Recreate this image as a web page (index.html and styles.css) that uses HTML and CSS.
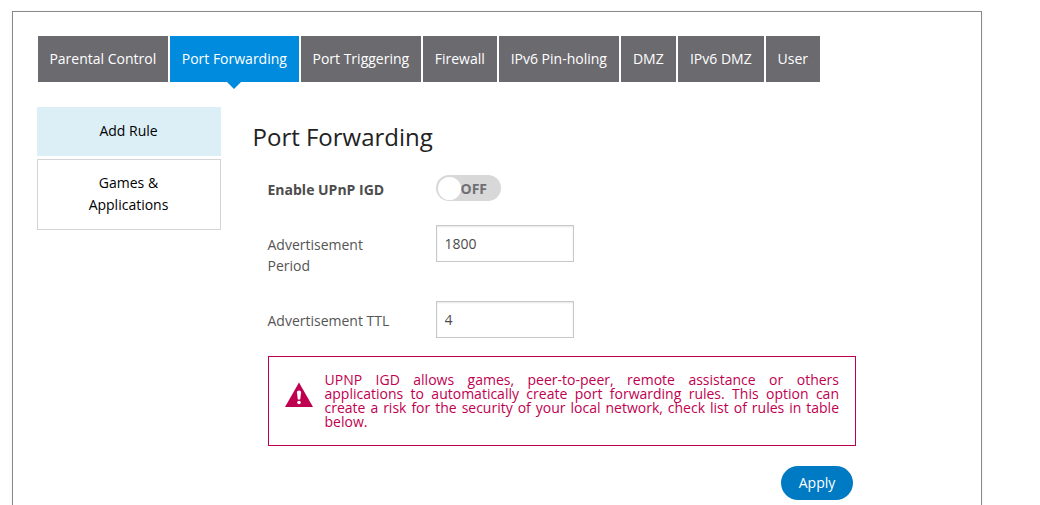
FILE: index.html
```html
<!DOCTYPE html>
<html lang="en">
<head>
<meta charset="utf-8">
<title>Port Forwarding</title>
<link rel="stylesheet" href="styles.css">
</head>
<body>
<main class="panel">
  <nav class="tabs">
    <a class="tab w130">Parental Control</a>
    <a class="tab w129 active">Port Forwarding</a>
    <a class="tab w120">Port Triggering</a>
    <a class="tab w74">Firewall</a>
    <a class="tab w120">IPv6 Pin-holing</a>
    <a class="tab w55">DMZ</a>
    <a class="tab w86">IPv6 DMZ</a>
    <a class="tab w54">User</a>
  </nav>
  <div class="body">
    <aside class="side">
      <a class="side-item current">Add Rule</a>
      <a class="side-item">Games &amp;<br>Applications</a>
    </aside>
    <section class="content">
      <h1 class="title">Port Forwarding</h1>
      <div class="form">
        <div class="row row-toggle">
          <span class="label strong">Enable UPnP IGD</span>
          <span class="toggle"><span class="knob"></span><span class="state">OFF</span></span>
        </div>
        <div class="row row-period">
          <label class="label" for="period">Advertisement<br>Period</label>
          <input class="field" id="period" value="1800">
        </div>
        <div class="row row-ttl">
          <label class="label" for="ttl">Advertisement TTL</label>
          <input class="field" id="ttl" value="4">
        </div>
        <div class="warning">
          <svg class="warn-icon" viewBox="0 0 28 25"><path d="M14 0.5 28 25H0Z" fill="#bf0050"/><path d="M11.9 10q0-1.5 2.1-1.5t2.1 1.5l-.9 7.5h-2.4z" fill="#fff"/><circle cx="14" cy="20.5" r="1.8" fill="#fff"/></svg>
          <p class="warn-text">UPNP IGD allows games, peer-to-peer, remote assistance or others applications to automatically create port forwarding rules. This option can create a risk for the security of your local network, check list of rules in table below.</p>
        </div>
        <div class="actions"><button class="apply">Apply</button></div>
      </div>
    </section>
  </div>
</main>
</body>
</html>
```

FILE: styles.css
```css
* { box-sizing: border-box; }
body {
  display: flow-root;
  margin: 0;
  background: #fff;
  font-family: "Open Sans", sans-serif;
  font-size: 14px;
  color: #555;
}
.panel {
  width: 970px;
  height: 494px;
  margin: 11px 0 0 12px;
  padding: 24px 25px 0 24px;
  border: 1px solid #888;
  border-bottom: 0;
  box-shadow: 0 1px 4px rgba(0, 0, 0, .06);
}
.tabs { display: flex; gap: 2px; padding-left: 1px; }
.tab {
  position: relative;
  height: 46px;
  padding-right: 0.4px;
  line-height: 46px;
  text-align: center;
  white-space: nowrap;
  color: #fff;
  background: #6b6a6f;
}
.tab.active { background: #008bdf; }
.tab.active::after {
  content: "";
  position: absolute;
  left: 57px;
  top: 46px;
  border: 7px solid transparent;
  border-top-color: #008bdf;
  border-bottom: 0;
}
.w130 { width: 130px; }
.w129 { width: 129px; }
.w120 { width: 120px; }
.w74 { width: 74px; }
.w55 { width: 55px; }
.w86 { width: 86px; }
.w54 { width: 54px; }
.body { display: flex; padding-top: 25px; }
.side { width: 184px; display: flex; flex-direction: column; gap: 3px; }
.side-item {
  padding: 12px 1px 13px 0;
  border: 1px solid #d5d5d5;
  line-height: 22px;
  text-align: center;
  color: #000;
}
.side-item.current { padding: 13px 1px 14px 0; border: 0; background: #dceff7; }
.content { padding-left: 31.5px; }
.title {
  margin: 13px 0 0;
  font-size: 24px;
  font-weight: 400;
  line-height: 34px;
  color: #222;
}
.form { width: 588px; margin-left: 15.5px; }
.row { display: flex; align-items: flex-start; }
.row-toggle { height: 71px; padding-top: 21px; }
.row-period { height: 76px; }
.row-ttl { height: 55px; }
.label { width: 168px; margin-left: -0.5px; margin-right: 0.5px; padding-top: 9px; line-height: 21px; color: #555; }
.strong { padding-top: 4px; font-weight: 700; color: #4c4c4c; }
.toggle {
  display: flex;
  align-items: center;
  width: 65px;
  height: 26px;
  padding: 0 1.5px;
  border-radius: 13px;
  background: #d8d8d8;
}
.knob { width: 23px; height: 23px; border-radius: 50%; background: #fff; }
.state { font-weight: 700; color: #706f74; }
.field {
  width: 138px;
  height: 37px;
  padding: 0 7.5px;
  border: 1px solid #c8c8c8;
  border-radius: 0;
  box-shadow: inset 0 1px 2px rgba(0, 0, 0, .1);
  font: inherit;
  color: #4c4c4c;
}
.warning {
  display: flex;
  height: 90px;
  padding: 16px 16px 0 15.5px;
  border: 1px solid #bf0050;
}
.warn-icon { flex: none; width: 28px; height: 25px; margin: 9px 12px 0 0; }
.warn-text { width: 515px; margin: 0; line-height: 14px; text-align: justify; color: #bf0050; }
.actions { display: flex; justify-content: flex-end; padding: 20px 3px 0 0; }
.apply {
  width: 72px;
  height: 34px;
  padding: 0 0 2px;
  border: 0;
  border-radius: 17px;
  background: #007ac3;
  font: inherit;
  color: #fff;
}
```
